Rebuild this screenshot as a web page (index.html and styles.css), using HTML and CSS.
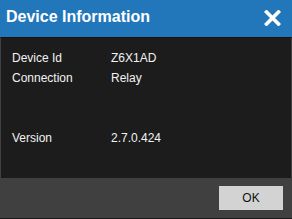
FILE: index.html
```html
<!DOCTYPE html>
<html>
<head>
<meta charset="utf-8">
<link rel="stylesheet" href="styles.css">
</head>
<body>
<div class="dialog">
  <div class="header">
    <div class="title">Device Information</div>
    <svg class="close" width="17" height="16" viewBox="0 0 17 16">
      <path d="M2.5 2 L14.5 14 M14.5 2 L2.5 14" stroke="#fff" stroke-width="3.6" stroke-linecap="square"/>
    </svg>
  </div>
  <div class="content">
    <div class="info">
      <div class="label">Device Id</div><div class="value">Z6X1AD</div>
      <div class="label">Connection</div><div class="value">Relay</div>
      <div class="label"></div><div class="value"></div>
      <div class="label"></div><div class="value"></div>
      <div class="label">Version</div><div class="value">2.7.0.424</div>
    </div>
  </div>
  <div class="footer">
    <button class="ok">OK</button>
  </div>
</div>
</body>
</html>
```
FILE: styles.css
```css
html, body {
  margin: 0;
  padding: 0;
  background: #1a1a1a;
}
.dialog {
  width: 292px;
  height: 218px;
  display: flex;
  flex-direction: column;
  font-family: "Liberation Sans", Arial, sans-serif;
}
.header {
  height: 37px;
  box-sizing: border-box;
  background: #2277bb;
  display: flex;
  justify-content: space-between;
  align-items: flex-start;
  padding: 8px 11px 0 6px;
}
.title {
  color: #fff;
  font-size: 16px;
  font-weight: bold;
  line-height: 18px;
}
.close {
  display: block;
  margin-top: 2px;
}
.content {
  height: 141px;
  box-sizing: border-box;
  background: #1c1c1c;
  border-left: 1px solid #404040;
  border-right: 1px solid #404040;
  border-top: 1px solid #111;
  padding: 10px 0 0 11px;
}
.info {
  display: grid;
  grid-template-columns: 99px auto;
  grid-auto-rows: 20px;
  font-size: 12px;
  line-height: 20px;
  color: #f2f2f2;
}
.footer {
  height: 40px;
  background: #404040;
  display: flex;
  justify-content: flex-end;
  align-items: flex-start;
  padding: 8px 9px 0 0;
  box-sizing: border-box;
}
.ok {
  width: 64px;
  height: 24px;
  border: none;
  background: #d3d3d3;
  color: #111;
  font-family: "Liberation Sans", Arial, sans-serif;
  font-size: 12px;
  padding: 0;
}
```
